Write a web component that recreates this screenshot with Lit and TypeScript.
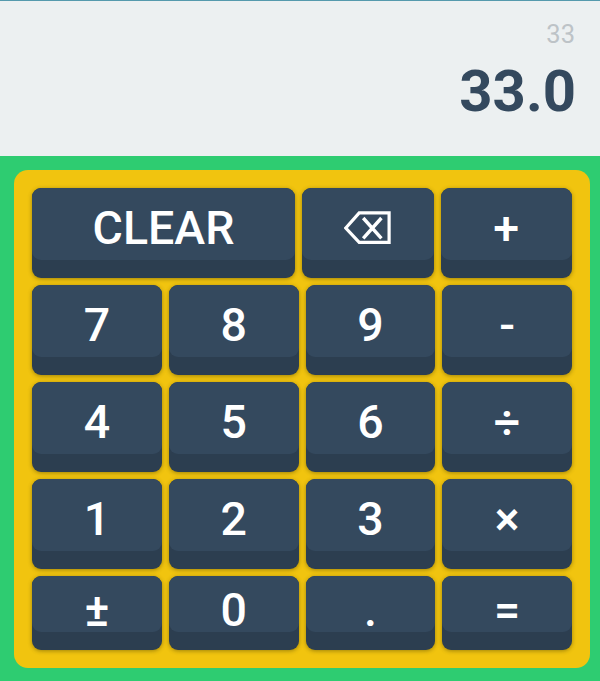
import { LitElement, html, css, svg } from "lit";
import { customElement, property } from "lit/decorators.js";

@customElement("calc-key")
class CalcKey extends LitElement {
  @property() label = "";

  static styles = css`
    :host {
      display: block;
      min-width: 0;
    }
    .key {
      display: flex;
      width: 100%;
      height: 100%;
      margin: 0;
      padding: 0 0 18px;
      border: 0;
      border-radius: 9px;
      background: #2c3e50;
      box-shadow: 0 1px 4px rgba(60, 50, 0, 0.45);
      font: 500 46.5px/40px Roboto, sans-serif;
      color: #fff;
      cursor: pointer;
    }
    .face {
      box-sizing: border-box;
      flex: 1;
      align-self: stretch;
      display: flex;
      align-items: center;
      justify-content: center;
      padding-top: 7px;
      border-radius: 9px;
      background: #34495e;
    }
    :host([short]) .face {
      padding-top: 12px;
    }
    .erase {
      display: block;
      width: 48px;
      height: 34px;
    }
  `;

  render() {
    const icon = svg`
      <path d="M1.8 17 15.2 1.9H45.1V31.3H15.2Z" stroke-width="3.2" />
      <path d="M19.2 7 37.4 27.4M37.4 7 19.2 27.4" stroke-width="3.4" />
    `;
    return html`
      <button class="key" aria-label=${this.label}>
        <span class="face">
          ${this.label === "Backspace"
            ? html`<svg class="erase" viewBox="0 0 48 34" fill="none" stroke="#fff">${icon}</svg>`
            : this.label}
        </span>
      </button>
    `;
  }
}

@customElement("app-root")
class AppRoot extends LitElement {
  static styles = css`
    :host {
      display: flex;
      flex-direction: column;
      box-sizing: border-box;
      height: 681px;
      background: #2ecc71;
      font-family: Roboto, sans-serif;
    }
    .display {
      box-sizing: border-box;
      height: 156px;
      padding: 18px 25px 0;
      border-top: 1px solid #559aad;
      background: #ecf0f1;
      text-align: right;
    }
    .expression {
      font-size: 25.5px;
      line-height: 30px;
      color: #bdc3c7;
    }
    .result {
      margin-top: 8px;
      margin-right: -1px;
      font-size: 58px;
      line-height: 68px;
      font-weight: 700;
      color: #34495e;
    }
    .pad {
      display: grid;
      grid-template-rows: repeat(4, 90px) 74px;
      gap: 7px;
      margin: 14px 10px 0 14px;
      padding: 18px;
      border-radius: 14px;
      background: #f1c40f;
    }
    .row {
      display: grid;
      grid-template-columns: repeat(4, 1fr);
      gap: 7px;
    }
    .top {
      grid-template-columns: 263px 1fr 1fr;
    }
  `;

  private rows = [
    ["CLEAR", "Backspace", "+"],
    ["7", "8", "9", "-"],
    ["4", "5", "6", "÷"],
    ["1", "2", "3", "×"],
    ["±", "0", ".", "="],
  ];

  render() {
    return html`
      <div class="display">
        <div class="expression">33</div>
        <div class="result">33.0</div>
      </div>
      <div class="pad">
        ${this.rows.map(
          (keys, i) => html`
            <div class="row ${i === 0 ? "top" : ""}">
              ${keys.map((k) => html`<calc-key .label=${k} ?short=${i === 4}></calc-key>`)}
            </div>
          `
        )}
      </div>
    `;
  }
}
